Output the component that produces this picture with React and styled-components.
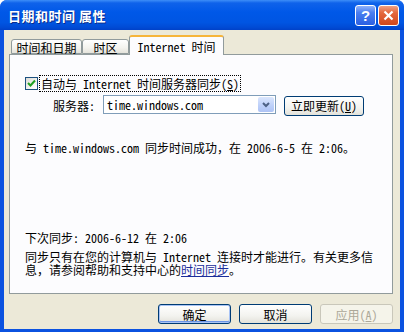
import styled, { createGlobalStyle } from 'styled-components';

const uiFont = `"Noto Sans Mono CJK SC", "Noto Sans CJK SC", "Liberation Mono", monospace`;

const GlobalStyle = createGlobalStyle`
  html, body {
    margin: 0;
    padding: 0;
    background: #ffffff;
  }
  body {
    font-family: ${uiFont};
    font-size: 12px;
    color: #000;
  }
`;

const Window = styled.div`
  width: 404px;
  height: 332px;
  display: flex;
  flex-direction: column;
  box-sizing: border-box;
  background: #0b52e0;
  border-radius: 7px 7px 0 0;
  overflow: hidden;
`;

const TitleBar = styled.div`
  height: 30px;
  flex-shrink: 0;
  display: flex;
  align-items: center;
  padding: 0 5px 0 8px;
  background: linear-gradient(
    180deg,
    #3d8ef8 0%,
    #0f62ea 10%,
    #0058e8 40%,
    #0055e2 75%,
    #004ad4 92%,
    #0041c8 100%
  );
`;

const Title = styled.div`
  flex: 1;
  color: #fff;
  font-family: "Noto Sans CJK SC", sans-serif;
  font-weight: 700;
  font-size: 13px;
  letter-spacing: 0.5px;
  text-shadow: 1px 1px 0 #0a2c8c;
`;

const CaptionBtn = styled.div`
  width: 21px;
  height: 21px;
  box-sizing: border-box;
  margin-left: 2px;
  border: 1px solid #fff;
  border-radius: 3px;
  display: flex;
  align-items: center;
  justify-content: center;
  color: #fff;
  font-family: "Liberation Sans", sans-serif;
  font-weight: 700;
  font-size: 15px;
  background: ${(p) =>
    p.$close
      ? 'linear-gradient(180deg, #f0a184 0%, #e4683e 35%, #d1471c 100%)'
      : 'linear-gradient(180deg, #8fb2fa 0%, #4a7ef0 35%, #2a5fe2 100%)'};
`;

const Body = styled.div`
  flex: 1;
  margin: 0 4px 3px 4px;
  background: #ece9d8;
  display: flex;
  flex-direction: column;
  padding: 5px 7px 0 5px;
`;

const TabList = styled.div`
  display: flex;
  align-items: flex-end;
  height: 19px;
  padding-left: 2px;
  position: relative;
  z-index: 2;
`;

const Tab = styled.div`
  box-sizing: border-box;
  width: ${(p) => p.$w}px;
  height: ${(p) => (p.$active ? 20 : 15)}px;
  margin-bottom: ${(p) => (p.$active ? -1 : 0)}px;
  display: flex;
  align-items: center;
  justify-content: center;
  border: 1px solid #919b9c;
  border-bottom: ${(p) => (p.$active ? 'none' : '1px solid #919b9c')};
  border-top: ${(p) => (p.$active ? '2px solid #f6b53a' : '1px solid #919b9c')};
  border-radius: 3px 3px 0 0;
  background: ${(p) =>
    p.$active ? '#fcfcfe' : 'linear-gradient(180deg, #ffffff 0%, #f4f3ee 60%, #e4e3db 100%)'};
  padding-top: ${(p) => (p.$active ? 0 : 1)}px;
  white-space: nowrap;
`;

const Panel = styled.div`
  height: 240px;
  box-sizing: border-box;
  border: 1px solid #919b9c;
  background: #fcfcfe;
  padding: 0 15px;
  display: flex;
  flex-direction: column;
`;

const CheckRow = styled.div`
  margin-top: 20px;
  height: 16px;
  display: flex;
  align-items: center;
`;

const CheckBox = styled.div`
  width: 13px;
  height: 13px;
  box-sizing: border-box;
  border: 1px solid #1c5180;
  background: linear-gradient(135deg, #dcdcd7 0%, #f4f4f0 60%, #ffffff 100%);
  display: flex;
  align-items: center;
  justify-content: center;
`;

const FocusLabel = styled.span`
  margin-left: 2px;
  padding: 0 1px;
  height: 15px;
  line-height: 15px;
  outline: 1px dotted #000;
  outline-offset: 0;
  white-space: nowrap;
`;

const ServerRow = styled.div`
  margin-top: 4px;
  margin-left: 28px;
  height: 21px;
  display: flex;
  align-items: center;
`;

const ServerLabel = styled.span`
  width: 50px;
`;

const Combo = styled.div`
  width: 173px;
  height: 19px;
  box-sizing: border-box;
  border: 1px solid #7f9db9;
  background: #fff;
  display: flex;
  align-items: center;
  padding: 1px 1px 1px 3px;
  margin-top: -2px;
`;

const ComboText = styled.span`
  flex: 1;
`;

const DropBtn = styled.div`
  width: 16px;
  height: 15px;
  border-radius: 2px;
  background: linear-gradient(180deg, #dbe6fd 0%, #bccff9 60%, #aec3f5 100%);
  display: flex;
  align-items: center;
  justify-content: center;
`;

const Button = styled.div`
  width: ${(p) => p.$w || 73}px;
  height: 20px;
  box-sizing: border-box;
  border: 1px solid ${(p) => (p.$disabled ? '#c9c7ba' : '#003c74')};
  border-radius: 3px;
  background: ${(p) =>
    p.$disabled ? '#f5f4ea' : 'linear-gradient(180deg, #ffffff 0%, #f3f3ef 60%, #e3e2da 100%)'};
  color: ${(p) => (p.$disabled ? '#aca899' : '#000')};
  box-shadow: ${(p) => (p.$default ? 'inset 0 0 0 1px #a9c4f5, inset 0 -1px 0 1px #6a94e6' : 'none')};
  display: flex;
  align-items: center;
  justify-content: center;
  white-space: nowrap;
`;

const UpdateButton = styled(Button)`
  margin-left: 8px;
`;

const StatusLine = styled.div`
  margin-top: 25px;
  line-height: 14px;
  white-space: nowrap;
`;

const NextLine = styled.div`
  margin-top: 76px;
  line-height: 14px;
  white-space: nowrap;
`;

const Para = styled.div`
  margin-top: 5px;
  line-height: 13px;
  width: 352px;
`;

const Link = styled.a`
  color: #1a2d9a;
  text-decoration: underline;
`;

const Footer = styled.div`
  display: flex;
  justify-content: flex-end;
  gap: 8px;
  margin-top: 10px;
`;

function CheckIcon() {
  return (
    <svg width="9" height="9" viewBox="0 0 9 9">
      <path d="M1 4 L3.5 6.5 L8 1.5" fill="none" stroke="#21a121" strokeWidth="2" />
    </svg>
  );
}

function Chevron() {
  return (
    <svg width="8" height="6" viewBox="0 0 8 6">
      <path d="M1 1 L4 4 L7 1" fill="none" stroke="#4d6185" strokeWidth="2" />
    </svg>
  );
}

function CloseX() {
  return (
    <svg width="11" height="11" viewBox="0 0 11 11">
      <path d="M1.5 1.5 L9.5 9.5 M9.5 1.5 L1.5 9.5" stroke="#fff" strokeWidth="2.2" />
    </svg>
  );
}

export default function App() {
  return (
    <>
      <GlobalStyle />
      <Window>
        <TitleBar>
          <Title>日期和时间 属性</Title>
          <CaptionBtn>?</CaptionBtn>
          <CaptionBtn $close>
            <CloseX />
          </CaptionBtn>
        </TitleBar>
        <Body>
          <TabList>
            <Tab $w={71}>时间和日期</Tab>
            <Tab $w={47}>时区</Tab>
            <Tab $w={95} $active>
              Internet 时间
            </Tab>
          </TabList>
          <Panel>
            <CheckRow>
              <CheckBox>
                <CheckIcon />
              </CheckBox>
              <FocusLabel>
                自动与 Internet 时间服务器同步(<u>S</u>)
              </FocusLabel>
            </CheckRow>
            <ServerRow>
              <ServerLabel>服务器:</ServerLabel>
              <Combo>
                <ComboText>time.windows.com</ComboText>
                <DropBtn>
                  <Chevron />
                </DropBtn>
              </Combo>
              <UpdateButton $w={80}>
                立即更新(<u>U</u>)
              </UpdateButton>
            </ServerRow>
            <StatusLine>与 time.windows.com 同步时间成功，在 2006-6-5 在 2:06。</StatusLine>
            <NextLine>下次同步: 2006-6-12 在 2:06</NextLine>
            <Para>
              同步只有在您的计算机与 Internet 连接时才能进行。有关更多信息，请参阅帮助和支持中心的
              <Link>时间同步</Link>。
            </Para>
          </Panel>
          <Footer>
            <Button $default>确定</Button>
            <Button>取消</Button>
            <Button $disabled>
              应用(<u>A</u>)
            </Button>
          </Footer>
        </Body>
      </Window>
    </>
  );
}
